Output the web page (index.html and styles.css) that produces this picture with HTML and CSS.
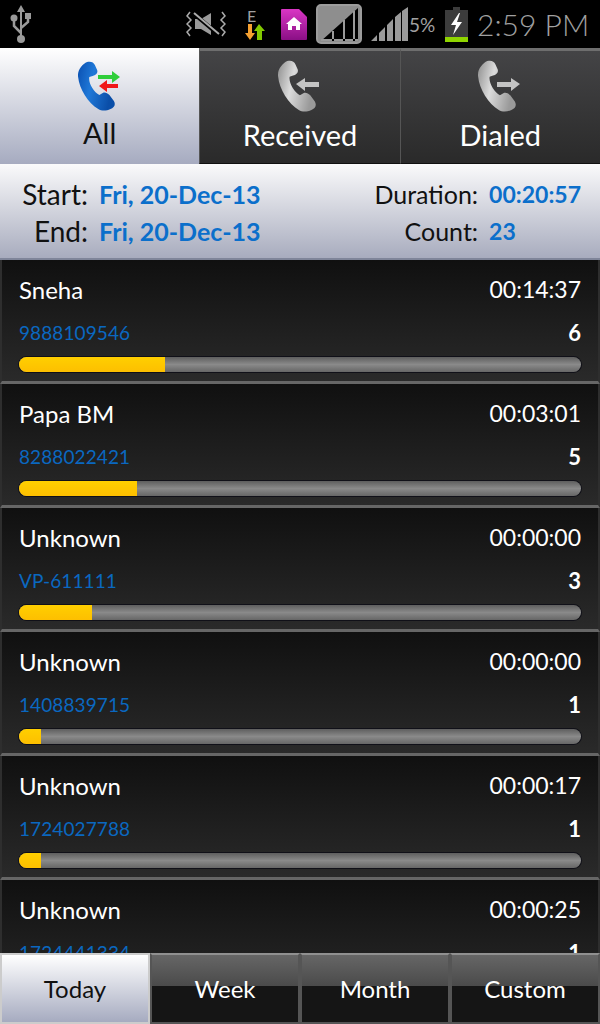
FILE: index.html
```html
<!DOCTYPE html>
<html lang="en">
<head>
    <meta charset="UTF-8">
    <meta name="viewport" content="width=device-width, initial-scale=1.0">
    <title>Call Log</title>
    <link rel="stylesheet" href="styles.css">
</head>
<body>
    <svg class="defs" width="0" height="0">
        <defs>
            <linearGradient id="blue" x1="0" y1="0" x2="1" y2="0.3">
                <stop offset="0" stop-color="#0a4fb0"/>
                <stop offset="0.45" stop-color="#1f78d8"/>
                <stop offset="1" stop-color="#0a4ea8"/>
            </linearGradient>
            <linearGradient id="grey" x1="0" y1="0" x2="1" y2="0.3">
                <stop offset="0" stop-color="#8e8e8e"/>
                <stop offset="0.45" stop-color="#dcdcdc"/>
                <stop offset="1" stop-color="#9a9a9a"/>
            </linearGradient>
            <linearGradient id="purple" x1="0" y1="0" x2="0" y2="1">
                <stop offset="0" stop-color="#d936c4"/>
                <stop offset="1" stop-color="#8a0f85"/>
            </linearGradient>
            <symbol id="handset" viewBox="0 0 34 50" preserveAspectRatio="none">
                <path d="M9 1C12 0 15 1 16 4L18 9C19 12 17 14 14 15L11 16C10 22 15 31 20 34L23 32C25 31 27 32 29 34L33 40C35 44 33 47 30 48C26 50 22 50 19 48C10 42 2 28 1 16C0 9 5 3 9 1Z"/>
            </symbol>
        </defs>
    </svg>

    <div class="status-bar">
        <svg class="st-usb" width="22" height="38" viewBox="0 0 22 38" fill="#9a9a9a">
            <path d="M11 0l4 7h-3v27h-2V7H7z"/>
            <path d="M11 28L4 21v-7M11 23l7-6v-4" fill="none" stroke="#9a9a9a" stroke-width="2.5"/>
            <circle cx="4" cy="13" r="3.5"/>
            <rect x="15" y="8" width="6" height="6"/>
            <circle cx="11" cy="34" r="4"/>
        </svg>
        <svg class="st-vib" width="40" height="26" viewBox="0 0 40 26" fill="none" stroke="#aaa" stroke-width="1.5">
            <path d="M4 1L1 5l4 4-4 4 4 4-4 4 3 4M36 1l3 4-4 4 4 4-4 4 4 4-3 4"/>
            <path d="M9 8h6l10-6v22l-10-6H9z" fill="#9a9a9a" stroke="none"/>
            <path d="M7 2l26 22" stroke="#000" stroke-width="4"/>
            <path d="M8 2l25 21" stroke-width="2"/>
        </svg>
        <div class="st-data">
            <span class="st-e">E</span>
            <svg width="21" height="16" viewBox="0 0 21 16">
                <path d="M3 0h4v9h3l-5 7-5-7h3z" fill="#f5a030"/>
                <path d="M14 0l6 7h-3v9h-5V7H9z" fill="#82c800"/>
            </svg>
        </div>
        <svg class="st-sim" width="26" height="31" viewBox="0 0 26 31">
            <path d="M1 0h17l8 8v22a1 1 0 0 1-1 1H1a1 1 0 0 1-1-1V1a1 1 0 0 1 1-1z" fill="url(#purple)"/>
            <path d="M13 8l8 7h-2v6h-4v-4h-4v4H7v-6H5z" fill="#fff"/>
        </svg>
        <svg class="st-box" width="46" height="40" viewBox="0 0 46 40">
            <rect x="1" y="1" width="44" height="38" rx="4" fill="#8e8e8e" stroke="#9c9c9c" stroke-width="2"/>
            <path d="M42 4v33H5z" fill="#000"/>
            <path d="M5 37h37v-2H5zM16 37V27h2v10zM27 37V16h2v21zM37 37V7h2v30z" fill="#9a9a9a"/>
        </svg>
        <svg class="st-bars" width="37" height="34" viewBox="0 0 37 34" fill="#9a9a9a">
            <path d="M0 34l6-6v6zM8 34V26l6-6v14zM16 34V18l6-6v22zM24 34V10l6-5v29zM31 34V4l6-4v34z"/>
        </svg>
        <span class="st-pct">5%</span>
        <svg class="st-batt" width="23" height="35" viewBox="0 0 23 35">
            <path d="M8 0h7v3h8v32H0V3h8z" fill="#3c3c3c"/>
            <rect y="30" width="23" height="5" fill="#8fd400"/>
            <path d="M14 6L6 18h5l-3 10 9-13h-5l3-9z" fill="#fff"/>
        </svg>
        <span class="st-time">2:59 PM</span>
    </div>

    <div class="tabs">
        <div class="tab active">
            <svg class="tab-icon" width="60" height="50" viewBox="0 0 60 50">
                <use href="#handset" x="7" width="38" height="50" fill="url(#blue)"/>
                <path d="M28 14h14v-4l8 6-8 6v-4H28z" fill="#2fce3a"/>
                <path d="M48 23H37v-4l-8 6 8 6v-4h11z" fill="#f01818"/>
            </svg>
            <span>All</span>
        </div>
        <div class="tab">
            <svg class="tab-icon" width="60" height="52" viewBox="0 0 60 52">
                <use href="#handset" x="7" width="39" height="52" fill="url(#grey)"/>
                <path d="M26 24l9-6v4h14v5H35v4z" fill="#c4c4c4"/>
            </svg>
            <span>Received</span>
        </div>
        <div class="tab">
            <svg class="tab-icon" width="60" height="52" viewBox="0 0 60 52">
                <use href="#handset" x="7" width="39" height="52" fill="url(#grey)"/>
                <path d="M50 24l-9-6v4H27v5h14v4z" fill="#c4c4c4"/>
            </svg>
            <span>Dialed</span>
        </div>
    </div>

    <div class="summary">
        <div class="sum-grid sum-left">
            <span class="sum-label">Start:</span><span class="sum-value">Fri, 20-Dec-13</span>
            <span class="sum-label">End:</span><span class="sum-value">Fri, 20-Dec-13</span>
        </div>
        <div class="sum-grid sum-right">
            <span class="sum-label">Duration:</span><span class="sum-value">00:20:57</span>
            <span class="sum-label">Count:</span><span class="sum-value">23</span>
        </div>
    </div>

    <div class="list">
        <div class="row">
            <div class="row-line"><span class="name">Sneha</span><span class="time">00:14:37</span></div>
            <div class="row-line"><span class="number">9888109546</span><span class="count">6</span></div>
            <div class="bar"><div class="bar-fill" style="width: 26%"></div></div>
        </div>
        <div class="row">
            <div class="row-line"><span class="name">Papa BM</span><span class="time">00:03:01</span></div>
            <div class="row-line"><span class="number">8288022421</span><span class="count">5</span></div>
            <div class="bar"><div class="bar-fill" style="width: 21%"></div></div>
        </div>
        <div class="row">
            <div class="row-line"><span class="name">Unknown</span><span class="time">00:00:00</span></div>
            <div class="row-line"><span class="number">VP-611111</span><span class="count">3</span></div>
            <div class="bar"><div class="bar-fill" style="width: 13%"></div></div>
        </div>
        <div class="row">
            <div class="row-line"><span class="name">Unknown</span><span class="time">00:00:00</span></div>
            <div class="row-line"><span class="number">1408839715</span><span class="count">1</span></div>
            <div class="bar"><div class="bar-fill" style="width: 4%"></div></div>
        </div>
        <div class="row">
            <div class="row-line"><span class="name">Unknown</span><span class="time">00:00:17</span></div>
            <div class="row-line"><span class="number">1724027788</span><span class="count">1</span></div>
            <div class="bar"><div class="bar-fill" style="width: 4%"></div></div>
        </div>
        <div class="row">
            <div class="row-line"><span class="name">Unknown</span><span class="time">00:00:25</span></div>
            <div class="row-line"><span class="number">1724441334</span><span class="count">1</span></div>
            <div class="bar"><div class="bar-fill" style="width: 4%"></div></div>
        </div>
    </div>

    <div class="bottom-nav">
        <button class="nav-btn active">Today</button>
        <button class="nav-btn">Week</button>
        <button class="nav-btn">Month</button>
        <button class="nav-btn">Custom</button>
    </div>
</body>
</html>
```

FILE: styles.css
```css
* {
    margin: 0;
    padding: 0;
    box-sizing: border-box;
    font-family: 'Lato', 'Open Sans', sans-serif;
}

body {
    width: 600px;
    height: 1024px;
    background-color: #000;
    display: flex;
    flex-direction: column;
    overflow: hidden;
}

.defs {
    position: absolute;
}

/* status bar */
.status-bar {
    height: 48px;
    flex: none;
    background-color: #000;
    display: flex;
    align-items: center;
    color: #a0a0a0;
}

.status-bar svg {
    flex: none;
}

.st-usb {
    margin-left: 10px;
}

.st-vib {
    margin-left: 154px;
}

.st-data {
    margin-left: 19px;
    width: 21px;
    display: flex;
    flex-direction: column;
}

.st-e {
    font-size: 16px;
    line-height: 16px;
    margin-left: 2px;
}

.st-sim {
    margin-left: 15px;
}

.st-box {
    margin-left: 9px;
}

.st-bars {
    margin-left: 9px;
}

.st-pct {
    font-size: 19px;
    width: 30px;
    margin-left: 1px;
    white-space: nowrap;
}

.st-batt {
    margin-left: 6px;
}

.st-time {
    font-size: 30px;
    margin-left: 9px;
    white-space: nowrap;
    font-weight: 300;
}

/* call type tabs */
.tabs {
    height: 116px;
    flex: none;
    display: flex;
}

.tab {
    flex: 1;
    display: flex;
    flex-direction: column;
    align-items: center;
    padding-top: 9px;
    background: linear-gradient(#444446 0%, #2a2a2a 100%);
    border-top: 3px solid #6e6e6e;
    border-left: 1px solid #555;
    border-bottom: 1px solid #111;
    color: #fff;
    font-size: 29px;
}

.tab span {
    line-height: 34px;
    margin-top: 6px;
}

.tab.active {
    background: linear-gradient(#fff 0%, #a6abc0 100%);
    border: none;
    padding-top: 13px;
    color: #111;
}

.tab.active span {
    margin-top: 5px;
}

/* date range + totals */
.summary {
    height: 96px;
    flex: none;
    display: flex;
    justify-content: space-between;
    align-items: flex-start;
    padding: 12px 19px 0;
    background: linear-gradient(#fafafb 0%, #a8acbe 100%);
    border-bottom: 2px solid #7f8599;
}

.sum-grid {
    display: grid;
    grid-template-columns: auto auto;
    column-gap: 11px;
    font-size: 25px;
    line-height: 37px;
}

.sum-left {
    grid-template-columns: 69px auto;
}

.sum-left .sum-label {
    font-size: 28px;
}

.sum-label {
    text-align: right;
    color: #111;
    white-space: nowrap;
}

.sum-value {
    color: #0b6fcb;
    font-weight: 700;
    white-space: nowrap;
}

.sum-right .sum-value {
    font-size: 23px;
}

/* call rows */
.list {
    flex: 1;
    min-height: 0;
    overflow: hidden;
}

.row {
    height: 124px;
    padding: 9px 17px 0;
    background: linear-gradient(#101010 0%, #2a2a2a 100%);
    border-left: 2px solid #2e2e2e;
    border-right: 2px solid #2e2e2e;
    border-bottom: 3px solid #666;
}

.row-line {
    display: flex;
    justify-content: space-between;
    align-items: center;
    color: #fff;
    height: 42px;
}

.name {
    font-size: 24px;
    margin-bottom: 2px;
}

.time {
    font-size: 23px;
    margin-bottom: 2px;
}

.number {
    font-size: 19px;
    letter-spacing: 0.1px;
    color: #0a68c0;
}

.count {
    font-size: 22px;
    font-weight: 700;
}

.bar {
    height: 15px;
    margin-top: 4px;
    border-radius: 8px;
    overflow: hidden;
    background: linear-gradient(#5e5e5e 0%, #8a8a8a 50%, #666 100%);
    box-shadow: 0 0 0 1px #101018;
}

.bar-fill {
    height: 100%;
    background: linear-gradient(#ffcf00 0%, #fdbf00 100%);
}

/* period buttons */
.bottom-nav {
    height: 71px;
    flex: none;
    display: flex;
    background-color: #000;
    margin-top: -71px;
    position: relative;
}

.nav-btn {
    width: 150px;
    height: 71px;
    border: 2px solid #555;
    border-top-color: #909090;
    background: linear-gradient(#666 0%, #4a4a4a 47%, #151515 47%, #151515 100%);
    color: #fff;
    font-size: 24px;
}

.nav-btn.active {
    background: linear-gradient(#fff 0%, #a6abc0 100%);
    border-color: #ccc;
    color: #111;
}
```
